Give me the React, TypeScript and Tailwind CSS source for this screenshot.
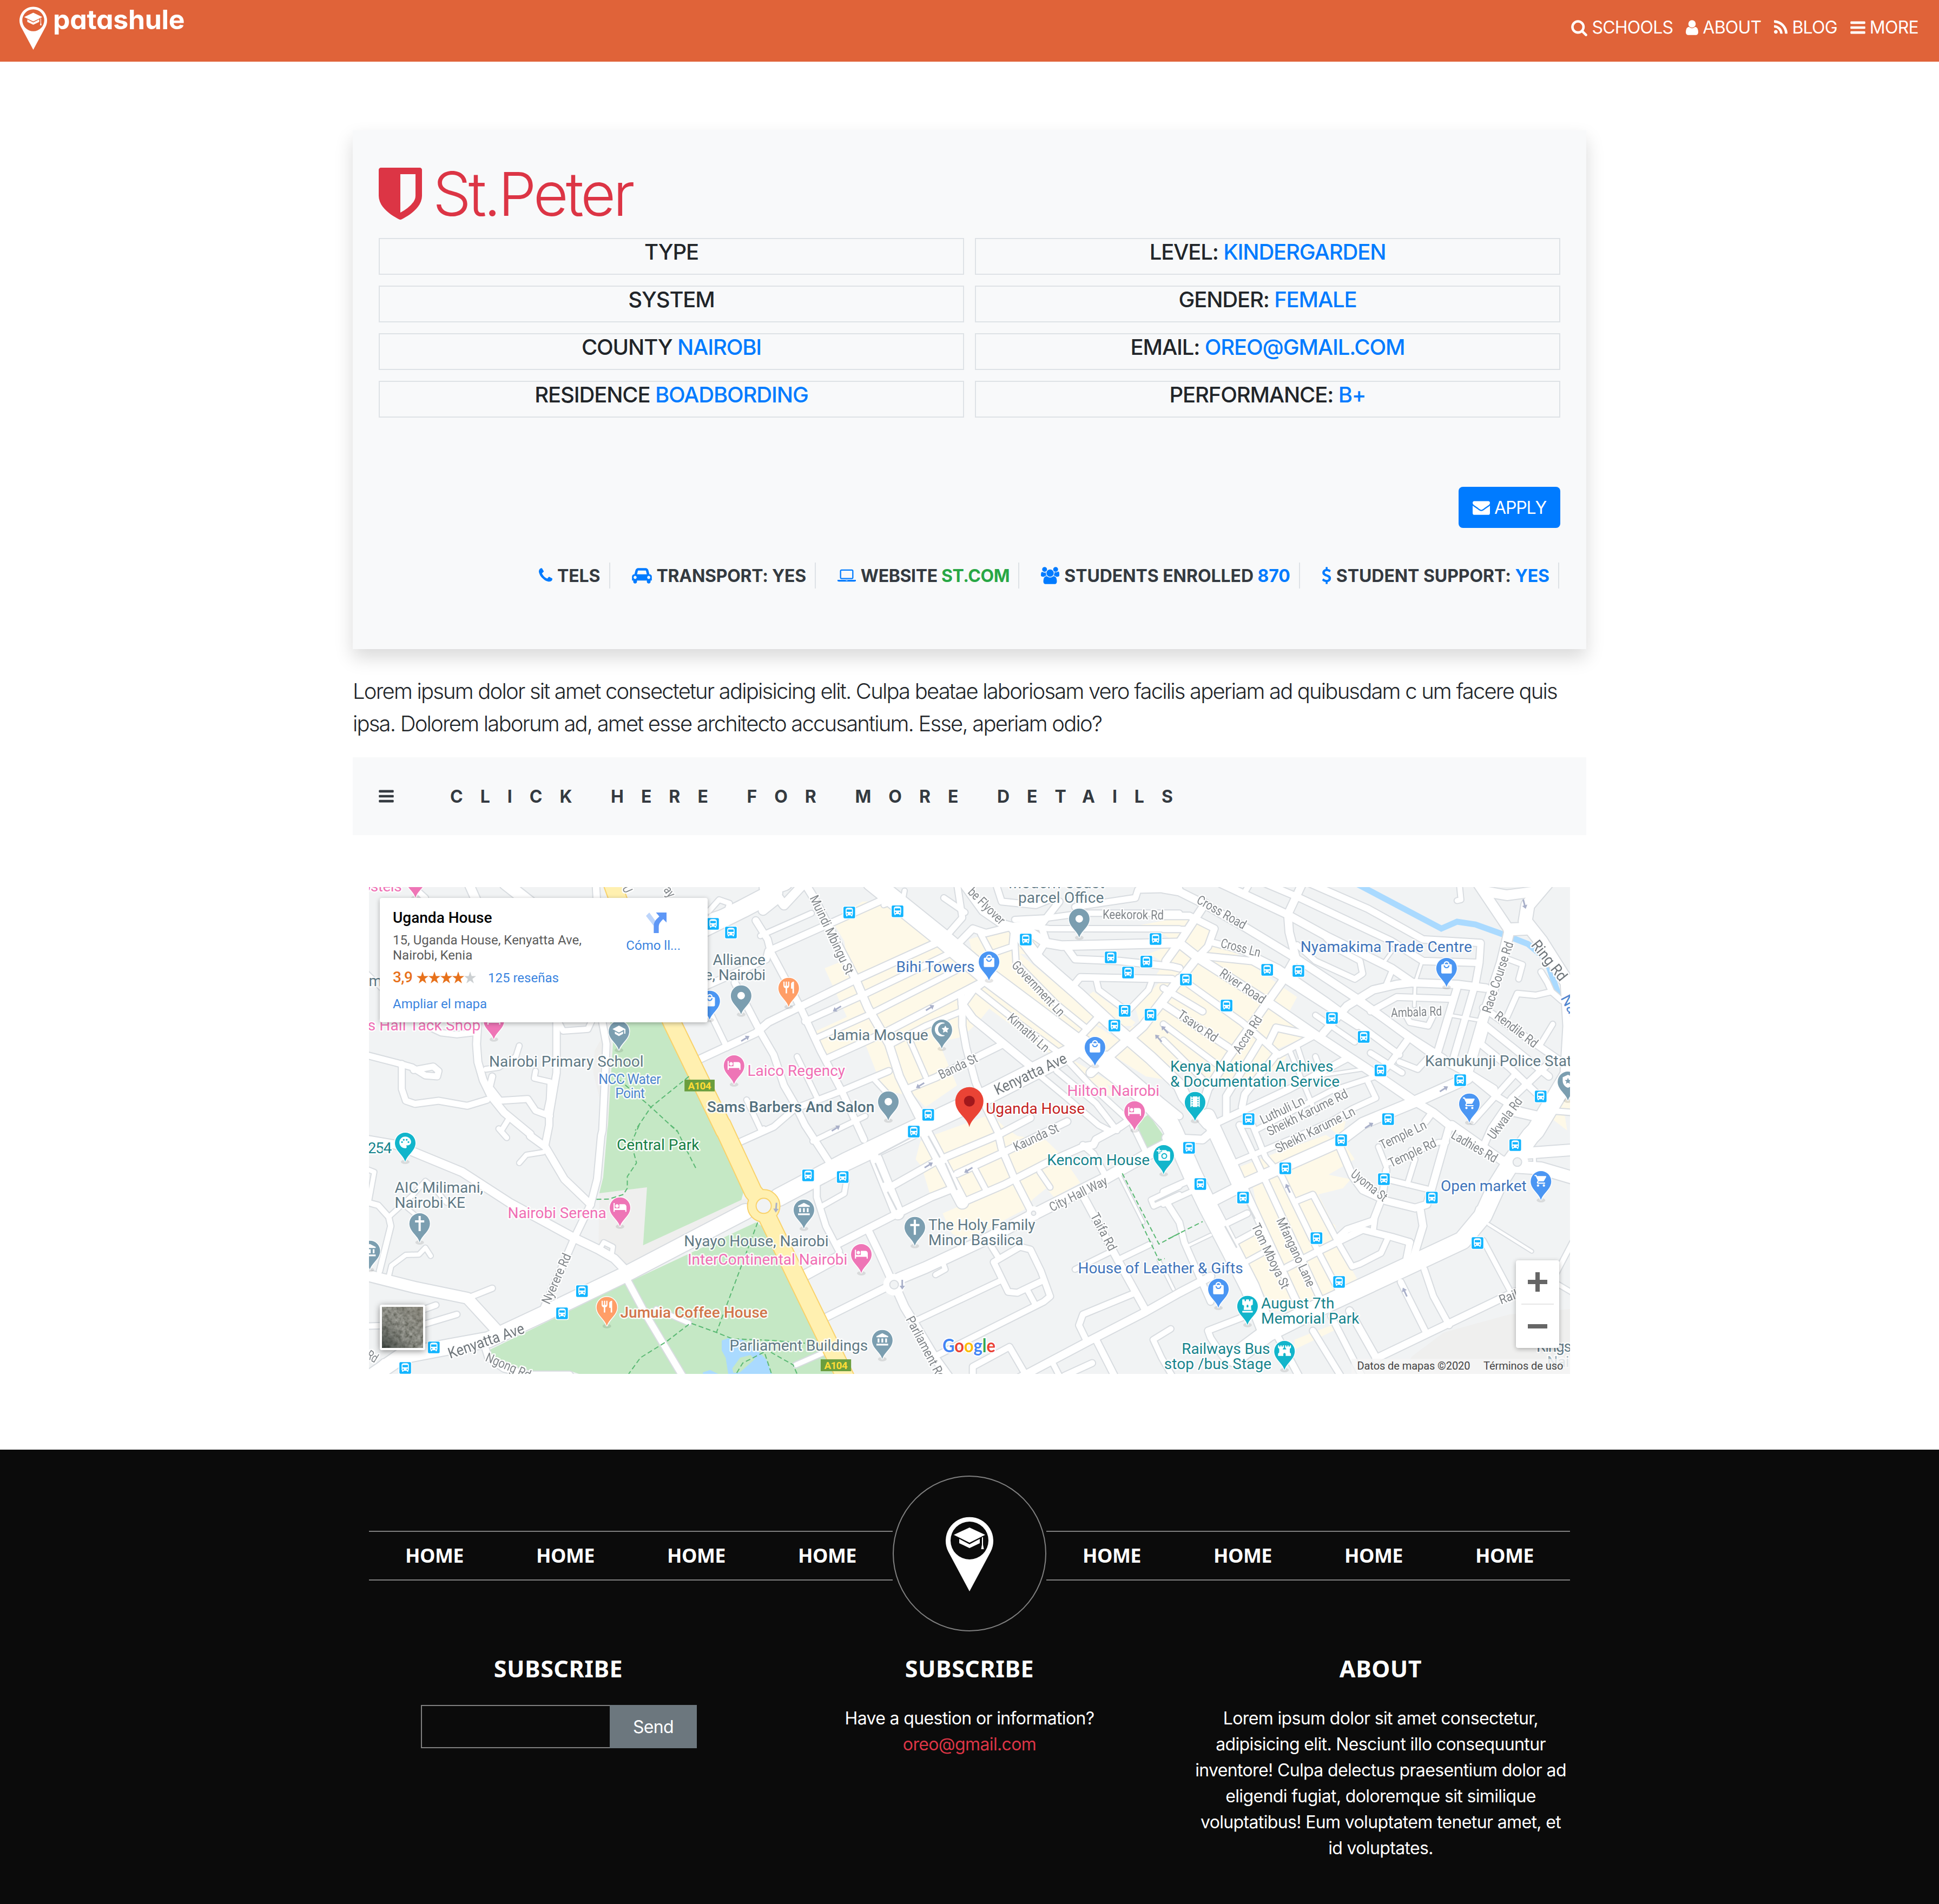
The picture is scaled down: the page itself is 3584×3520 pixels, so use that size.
import React from "react";
import {
  MdAccountBalance,
  MdAddAPhoto,
  MdDirectionsBus,
  MdFort,
  MdHotel,
  MdLocalMall,
  MdLocalPolice,
  MdPalette,
  MdRestaurant,
  MdSchool,
  MdShoppingCart,
  MdTheaters,
} from "react-icons/md";
import { FaChessRook, FaStarAndCrescent } from "react-icons/fa";

/* ------------------------------------------------------------------ */
/* Glyph icons                                                         */
/* ------------------------------------------------------------------ */

type Glyph = { box: string; d: string };

const GLYPHS: Record<string, Glyph> = {
  search: {
    box: "64 0 1664 1792",
    d: "M1216 832q0-185-131.5-316.5t-316.5-131.5-316.5 131.5-131.5 316.5 131.5 316.5 316.5 131.5 316.5-131.5 131.5-316.5zm512 832q0 52-38 90t-90 38q-54 0-90-38l-343-342q-179 124-399 124-143 0-273.5-55.5t-225-150-150-225-55.5-273.5 55.5-273.5 150-225 225-150 273.5-55.5 273.5 55.5 225 150 150 225 55.5 273.5q0 220-124 399l343 343q37 37 37 90z",
  },
  user: {
    box: "256 0 1280 1792",
    d: "M1536 1399q0 109-62.5 187t-150.5 78h-854q-88 0-150.5-78t-62.5-187q0-85 8.5-160.5t31.5-152 58.5-131 94-89 134.5-34.5q131 128 313 128t313-128q76 0 134.5 34.5t94 89 58.5 131 31.5 152 8.5 160.5zm-256-887q0 159-112.5 271.5t-271.5 112.5-271.5-112.5-112.5-271.5 112.5-271.5 271.5-112.5 271.5 112.5 112.5 271.5z",
  },
  rss: {
    box: "192 0 1408 1792",
    d: "M576 1344q0 80-56 136t-136 56-136-56-56-136 56-136 136-56 136 56 56 136zm512 123q2 28-17 48-18 21-47 21h-135q-25 0-43-16.5t-20-41.5q-22-229-184.5-391.5t-391.5-184.5q-25-2-41.5-20t-16.5-43v-135q0-29 21-47 17-17 43-17h5q160 13 306 80.5t259 181.5q114 113 181.5 259t80.5 306zm512 2q2 27-18 47-18 20-46 20h-143q-26 0-44.5-17.5t-19.5-42.5q-12-215-101-408.5t-231.5-336-336-231.5-408.5-102q-25-1-42.5-19.5t-17.5-43.5v-143q0-28 20-46 18-18 44-18h3q262 13 501.5 120t425.5 294q187 186 294 425.5t120 501.5z",
  },
  bars: {
    box: "128 0 1536 1792",
    d: "M1664 1344v128q0 26-19 45t-45 19h-1408q-26 0-45-19t-19-45v-128q0-26 19-45t45-19h1408q26 0 45 19t19 45zm0-512v128q0 26-19 45t-45 19h-1408q-26 0-45-19t-19-45v-128q0-26 19-45t45-19h1408q26 0 45 19t19 45zm0-512v128q0 26-19 45t-45 19h-1408q-26 0-45-19t-19-45v-128q0-26 19-45t45-19h1408q26 0 45 19t19 45z",
  },
  shield: {
    box: "0 0 1280 1536",
    d: "M1088 832v-640h-448v1137q119-63 213-137 235-184 235-360zM1280 64v768q0 86-33.5 170.5t-83 150-118 127.5-126.5 103-121 77.5-89.5 49.5-42.5 20q-12 6-26 6t-26-6q-16-7-42.5-20t-89.5-49.5-121-77.5-126.5-103-118-127.5-83-150-33.5-170.5v-768q0-26 19-45t45-19h1152q26 0 45 19t19 45z",
  },
  envelope: {
    box: "0 0 1792 1792",
    d: "M1792 710v794q0 66-47 113t-113 47h-1472q-66 0-113-47t-47-113v-794q44 49 101 87 362 246 497 345 57 42 92.5 65.5t94.5 48 110 24.5h2q51 0 110-24.5t94.5-48 92.5-65.5q170-123 498-345 57-39 100-87zm0-294q0 79-49 151t-122 123q-376 261-468 325-10 7-42.5 30.5t-54 38-52 32.5-57.5 27-50 9h-2q-23 0-50-9t-57.5-27-52-32.5-54-38-42.5-30.5q-91-64-262-182.5t-205-142.5q-62-42-117-115.5t-55-136.5q0-78 41.5-130t118.5-52h1472q65 0 112.5 47t47.5 113z",
  },
  phone: {
    box: "192 0 1408 1792",
    d: "M1600 1240q0 27-10 70.5t-21 68.5q-21 50-122 106-94 51-186 51-27 0-53-3.5t-57.5-12.5-47-14.5-55.5-20.5-49-18q-98-35-175-83-127-79-264-216t-216-264q-48-77-83-175-3-9-18-49t-20.5-55.5-14.5-47-12.5-57.5-3.5-53q0-92 51-186 56-101 106-122 25-11 68.5-21t70.5-10q14 0 21 3 18 6 53 76 11 19 30 54t35 63.5 31 53.5q3 4 17.5 25t21.5 35.5 7 28.5q0 20-28.5 50t-62 55-62 53-28.5 46q0 9 5 22.5t8.5 20.5 14 24 11.5 19q76 137 174 235t235 174q2 1 19 11.5t24 14 20.5 8.5 22.5 5q18 0 46-28.5t53-62 55-62 50-28.5q14 0 28.5 7t35.5 21.5 25 17.5q25 15 53.5 31t63.5 35 54 30q70 35 76 53 3 7 3 21z",
  },
  car: {
    box: "0 0 2048 1792",
    d: "M480 1088q0-66-47-113t-113-47-113 47-47 113 47 113 113 47 113-47 47-113zm36-320h1016l-89-357q-2-8-14-17.5t-21-9.5h-768q-9 0-21 9.5t-14 17.5zm1372 320q0-66-47-113t-113-47-113 47-47 113 47 113 113 47 113-47 47-113zm160-96v384q0 14-9 23t-23 9h-96v128q0 80-56 136t-136 56-136-56-56-136v-128h-1024v128q0 80-56 136t-136 56-136-56-56-136v-128h-96q-14 0-23-9t-9-23v-384q0-93 65.5-158.5t158.5-65.5h28l105-419q23-94 104-157.5t179-63.5h768q98 0 179 63.5t104 157.5l105 419h28q93 0 158.5 65.5t65.5 158.5z",
  },
  laptop: {
    box: "0 0 1920 1792",
    d: "M416 1280q-66 0-113-47t-47-113v-704q0-66 47-113t113-47h1088q66 0 113 47t47 113v704q0 66-47 113t-113 47h-1088zm-32-864v704q0 13 9.5 22.5t22.5 9.5h1088q13 0 22.5-9.5t9.5-22.5v-704q0-13-9.5-22.5t-22.5-9.5h-1088q-13 0-22.5 9.5t-9.5 22.5zm1376 928h160v96q0 40-47 68t-113 28h-1600q-66 0-113-28t-47-68v-96h1760zm-720 96q16 0 16-16t-16-16h-160q-16 0-16 16t16 16h160z",
  },
  users: {
    box: "0 0 1920 1792",
    d: "M593 896q-162 5-265 128h-134q-82 0-138-40.5t-56-118.5q0-353 124-353 6 0 43.5 21t97.5 42.5 119 21.5q67 0 133-23-5 37-5 66 0 159 93 293zm1071 637q0 120-73 189.5t-194 69.5h-874q-121 0-194-69.5t-73-189.5q0-53 3.5-103.5t14-109 26.5-108.5 43-97.5 62-81 85.5-53.5 111.5-20q10 0 43 21.5t73 48 107 48 135 21.5 135-21.5 107-48 73-48 43-21.5q61 0 111.5 20t85.5 53.5 62 81 43 97.5 26.5 108.5 14 109 3.5 103.5zm-1024-1277q0 106-75 181t-181 75-181-75-75-181 75-181 181-75 181 75 75 181zm704 384q0 159-112.5 271.5t-271.5 112.5-271.5-112.5-112.5-271.5 112.5-271.5 271.5-112.5 271.5 112.5 112.5 271.5zm576 225q0 78-56 118.5t-138 40.5h-134q-103-123-265-128 93-134 93-293 0-29-5-66 66 23 133 23 59 0 119-21.5t97.5-42.5 43.5-21q124 0 124 353zm-128-609q0 106-75 181t-181 75-181-75-75-181 75-181 181-75 181 75 75 181z",
  },
  dollar: {
    box: "384 0 1024 1792",
    d: "M1362 1185q0 153-99.5 263.5t-258.5 136.5v175q0 14-9 23t-23 9h-135q-13 0-22.5-9.5t-9.5-22.5v-175q-66-9-127.5-31t-101.5-44.5-74-48-46.5-37.5-17.5-18q-17-21-2-41l103-135q7-10 23-12 15-2 24 9l2 2q113 99 243 125 37 8 74 8 81 0 142.5-43t61.5-122q0-28-15-53t-33.5-42-58.5-37.5-66-32-80-32.5q-39-16-61.5-25t-61.5-26.5-62.5-31-56.5-35.5-53.5-42.5-43.5-49-35.5-58-21-66.5-8.5-78q0-138 98-242t255-134v-180q0-13 9.5-22.5t22.5-9.5h135q14 0 23 9t9 23v176q57 6 110.5 23t87 33.5 63.5 37.5 39 29 15 14q17 18 5 38l-81 146q-8 15-23 16-14 3-27-7-3-3-14.5-12t-39-26.5-58.5-32-74.5-26-85.5-11.5q-95 0-155 43t-60 111q0 26 8.5 48t29.5 41.5 39.5 33 56 31 60.5 27 70 27.5q53 20 81 31.5t76 35 75.5 42.5 62 50 53 63.5 31.5 76.5 13 94z",
  },
};

function Icon({ name, className }: { name: string; className?: string }) {
  const g = GLYPHS[name];
  return (
    <svg viewBox={g.box} className={className} fill="currentColor" fillRule="nonzero">
      <path d={g.d} />
    </svg>
  );
}

function PinLogo({ className }: { className?: string }) {
  return (
    <svg viewBox="0 0 88 138" className={className} fill="#fff">
      <path
        fillRule="evenodd"
        d="M44 138 L5 65 A44 44 0 1 1 83 65 Z M44 9 A35 35 0 1 0 44 79 A35 35 0 1 0 44 9 Z"
      />
      <path d="M44 20 L73 33.5 L44 48 L15 33.5 Z" />
      <path d="M25 41 L44 51 L63 41 V49 L44 58 L25 49 Z" />
      <path d="M67 38 H69 V52 L70.500 60 H65.500 L67 52 Z" />
    </svg>
  );
}

/* ------------------------------------------------------------------ */
/* Map data: six survey tiles, each with its own local grid            */
/* ------------------------------------------------------------------ */

const KX = 760 / 1568;
const ORIGIN: Record<string, [number, number]> = {
  A: [670, 1630],
  B: [1420, 1630],
  C: [2160, 1630],
  D: [670, 2080],
  E: [1420, 2080],
  F: [2160, 2080],
};

type Pt = [number, number];

function pts(src: string): Pt[] {
  let tile: Pt = ORIGIN.A;
  const out: Pt[] = [];
  for (const tok of src.split(" ")) {
    if (ORIGIN[tok]) {
      tile = ORIGIN[tok];
    } else if (tok) {
      const [x, y] = tok.split(",").map(Number);
      out.push([tile[0] + x * KX, tile[1] + y / 3]);
    }
  }
  return out;
}

const line = (src: string) =>
  "M" + pts(src).map((p) => `${p[0].toFixed(1)} ${p[1].toFixed(1)}`).join("L");

const BEIGE = [
  "B 360,110 430,110 640,325 820,540 845,700 800,780 740,860 650,890 720,1130 600,1250 560,1190 440,1160 370,900 225,965 180,830 300,750 215,480 300,430 290,330 240,210",
  "B 765,320 880,270 960,260 1020,290 1025,410 960,400 1240,740 1190,850 850,560 850,430 780,400",
  "B 800,600 830,565 1130,910 1095,975 820,680",
  "B 1190,880 1240,790 1340,880 1310,960 1440,1080 1560,1110 1568,700 1540,560 1490,560 1400,700 1420,800 1260,800 1200,650 1240,610 1400,780 1290,960",
  "B 1150,980 1340,1140 1330,1160 1290,1120 1320,1200 1260,1160",
  "B 1470,260 1420,240 1568,200 1568,520 1480,515 1510,450 1450,400 1560,340",
  "C 0,205 60,210 130,220 180,260 150,330 260,400 420,570 490,640 460,720 540,850 380,950 450,970 420,1040 250,1110 100,1080 0,1000",
  "E 640,50 850,-60 900,10 950,60 1060,85 1120,170 1190,320 1090,400 1060,350 1010,410 975,470 750,640 700,600 665,490 760,430 690,360 615,375 585,230 562,190 580,90",
  "F 265,235 400,160 600,55 680,125 710,190 610,275 695,300 665,350 570,385 615,515 600,520 635,555 650,680 730,880 660,940 540,1040 400,1030 290,750 265,650 330,600 350,560 320,330 290,320",
  "F 550,1150 640,1100 630,1140 480,1245 480,1190",
  "F 600,0 610,-30 675,-20 660,70",
  "C 1460,1260 1500,1190 1531,1210 1531,1260",
  "C 1440,1290 1510,1290 1520,1380",
];

const GREEN = [
  "A 945,780 1160,780 1360,1380 D 1372,80 1455,360 1445,415 1070,667 1085,345 903,378 918,290 935,0 A 935,1380 955,900",
  "D 1500,540 1030,860 480,1250 510,1320 560,1350 640,1365 790,1362 830,1382 E 250,1382 150,1060 20,600",
  "E 1405,-10 1450,-60 1525,95 1445,135",
];

const GREY = [
  "D 903,378 1085,345 1070,667 1445,415 1475,400 1480,470 1010,800 960,730 900,690",
  "F 1531,1020 1300,1050 1050,1150 930,1280 880,1380 1531,1380",
  "A 945,780 885,940 880,1060 935,1380 955,950",
];

const WATER = [
  "D 1370,1195 1395,1182 1450,1190 1500,1240 1540,1300 1562,1382 1395,1382 1385,1290 1370,1250",
  "D 1298,1372 1325,1358 1360,1382 1298,1382",
];

/* width | points */
const ROADS: [number, string][] = [
  [16, "A 405,10 445,140"],
  [22, "A 545,10 650,130"],
  [10, "A 180,10 240,90"],
  [12, "A 890,10 905,400 915,780 930,900 925,1080 915,1380 D 910,60 895,300 870,440 810,620 760,790 690,1020"],
  [12, "A 740,780 740,1060 712,1300 D 712,0 697,110"],
  [10, "A 745,770 765,828 860,818 875,770"],
  [10, "A 230,790 300,838 360,848 440,835"],
  [13, "A 440,770 435,900 440,1000 460,1100 490,1190 540,1280 640,1400 D 640,60 697,120 770,300 870,440"],
  [11, "A 10,960 130,1005 190,1030 240,1075 285,1080 290,1050 270,1025 195,1045"],
  [11, "A 150,1010 150,1150 165,1215 200,1232 290,1215 400,1243 475,1210"],
  [11, "A 495,1080 485,1140 525,1215 630,1205 660,1270 715,1300"],
  [9, "A 598,910 585,970 520,1030 470,1040"],
  [9, "A 660,1050 655,1090 715,1110 712,1210 700,1290"],
  [9, "A 560,1310 530,1380 D 520,20 550,70"],
  [9, "A 10,500 80,600"],
  [32, "A 1290,265 1450,150 1568,60 B 0,30 60,0"],
  [16, "B -20,160 40,90 60,130 130,20"],
  [9, "A 1320,165 1360,100 1400,120 1390,160 1330,190"],
  [12, "A 1300,585 1540,430 B 0,385 200,255 430,105"],
  [9, "B -30,300 165,175"],
  [12, "A 1500,215 1545,320 B 10,390 120,690 200,940 280,1160 E 365,80"],
  [13, "A 1285,985 1500,840 B 0,780 330,545 640,340"],
  [10, "A 1330,740 1390,920"],
  [12, "A 1420,560 1520,840 1568,960 B 60,1130 100,1230 E 140,0 230,200"],
  [9, "A 1465,1210 1520,1380 D 1530,20"],
  [11, "D 1430,100 1568,10 E 100,-90 B 280,1160 460,1050"],
  [9, "B 110,970 140,1060 190,1210"],
  [9, "B 400,1090 470,1200"],
  [11, "B 140,775 360,630 690,400"],
  [10, "B 180,870 380,740 760,460"],
  [12, "B 220,985 440,840 830,545"],
  [10, "B 470,900 600,800 735,720"],
  [9, "B 540,880 600,1080"],
  [12, "B 530,1150 640,1085 890,905"],
  [14, "B 140,10 170,80 330,530 380,700 460,900 500,1080 570,1290 E 600,20"],
  [10, "B 510,1120 600,1320"],
  [12, "B 735,620 740,720 740,800 755,920 790,1110 830,1250 875,1385 E 890,130 940,300 1000,470"],
  [14, "B 830,545 780,600 740,680 780,760 890,890 990,1010 1040,1060"],
  [10, "B 795,600 960,790 1110,950"],
  [10, "B 940,330 945,450 1100,680 1210,810"],
  [12, "B 1170,890 1260,750"],
  [22, "B 940,260 1030,430 1180,620 1300,780 1460,980 1568,1130 C 60,1190 150,1340"],
  [16, "B 1568,540 1430,800 1290,980 1230,1060"],
  [12, "B 1290,960 1500,1220 1568,1300"],
  [11, "B 720,10 740,200 680,300"],
  [10, "B 670,90 750,170"],
  [12, "B 720,350 780,260 830,285 940,245 1040,225"],
  [10, "B 810,290 850,400 930,360 935,280"],
  [8, "B 520,50 515,90 440,130"],
  [16, "B 740,0 820,160 900,240 1000,280 1060,340 1120,355 1568,340 C 40,350"],
  [11, "B 870,20 890,110 1020,130 1090,90"],
  [12, "B 1110,110 1040,240 1060,330 1020,420"],
  [10, "B 940,210 1070,200 1200,175 1568,175"],
  [10, "B 960,240 1070,260 1568,262"],
  [12, "B 1140,370 1170,430 1340,440 1540,470 1568,480"],
  [11, "B 1170,140 1400,90 1410,45 1568,40"],
  [12, "B 1150,600 1190,530 1540,540"],
  [10, "B 1250,540 1260,600 1370,720 1450,600 1460,560"],
  [10, "B 1040,1080 1140,1200 1260,1350 E 1300,30"],
  [10, "B 1120,960 1230,1130 1380,1330"],
  [10, "B 1100,1050 1250,1230 1330,1380"],
  [14, "C -20,40 40,55 130,120 300,260 470,410 720,650 1010,960 1140,1060 1240,1150"],
  [14, "C 200,10 450,180 600,300 850,480 930,560"],
  [12, "C 370,10 500,90 850,330 970,440 1180,450"],
  [14, "C 510,10 455,180 460,280 485,420 430,560 230,970 150,1150 130,1240"],
  [10, "C 310,10 290,60"],
  [12, "C 540,10 760,150 970,320 1190,340 1185,450 1170,570"],
  [11, "C 160,335 280,380 420,480 600,660 880,960"],
  [16, "C 40,340 110,420 390,680 560,850 800,1080 940,1220"],
  [14, "C 140,120 40,340 -10,440"],
  [12, "C -20,190 80,190 175,260 150,360 110,420"],
  [10, "C -20,265 70,265"],
  [12, "C 120,410 320,440 420,520 720,800"],
  [11, "C -20,590 130,720"],
  [11, "C 50,540 280,780 360,880 420,960"],
  [12, "C -20,680 230,920"],
  [10, "C -20,790 190,1020"],
  [10, "C -20,880 140,1110"],
  [14, "C 110,420 -20,660"],
  [9, "C 560,740 710,890"],
  [14, "C 590,840 680,690 780,600 870,570 930,560 1100,570 1210,590"],
  [11, "C 770,720 870,640 1080,650"],
  [12, "C 720,660 920,860 1050,980"],
  [10, "C 490,350 560,440 710,540 740,510 730,440 640,370 600,310"],
  [10, "C 905,740 920,780 990,800 1010,740"],
  [9, "C 850,500 830,570"],
  [5, "C 965,450 940,560 937,690"],
  [5, "C 850,390 820,450"],
  [13, "C 1100,590 1025,950"],
  [12, "C 1165,590 1080,1010"],
  [5, "C 1070,740 1190,770"],
  [18, "C 1180,10 1300,270 1270,450 1200,760 1150,1010 1140,1060"],
  [24, "C 1440,10 1370,130 1360,220 1420,330 1520,560 1530,800 1520,1050"],
  [18, "C 1210,55 1290,75 1420,50"],
  [22, "C 1300,265 1370,260"],
  [9, "C 1110,30 1115,100 1100,105"],
  [9, "C 1295,430 1350,460 1335,540"],
  [10, "C 1290,750 1330,620 1400,630 1460,610 1500,660"],
  [10, "C 1420,500 1445,560 1460,610"],
  [12, "C 1200,700 1320,820 1400,900 1500,1000"],
  [9, "C 1415,910 1465,790"],
  [12, "C 1210,800 1450,1080"],
  [12, "C 1210,800 1190,900 1300,1030 1400,1170"],
  [12, "C 1440,1020 1310,1200 1230,1370 F 1200,120"],
  [12, "C 1140,1060 1250,1190 1340,1270"],
  [10, "C 1320,1070 1160,1330"],
  [12, "C 180,1340 460,1150 680,980"],
  [9, "C 330,1380 620,1160 810,1070"],
  [10, "F 250,210 480,70 C 620,1330 700,1260 790,1200 760,1110"],
  [10, "C 770,950 890,1060"],
  [12, "C 920,860 850,1000 800,1080"],
  [10, "C 880,1000 950,1040 1000,960"],
  [12, "C 380,900 410,810 540,850"],
  [11, "C 420,960 560,850"],
  [12, "C 350,880 220,1190 220,1300"],
  [12, "C 410,960 290,1180 280,1250"],
  [8, "C 460,930 560,1280"],
  [8, "C 490,910 520,1040"],
  [9, "C 560,970 575,1030"],
  [5, "C 560,1080 740,1040"],
  [20, "F 140,440 300,320 640,100 C 740,1340 940,1220 1140,1090"],
  [14, "C 940,1220 1010,1280 1070,1350 F 1080,10"],
  [12, "C 980,1330 1000,1290"],
  [32, "C 1540,1040 1400,1380 F 1380,60 1310,200 1250,340 1200,500 1120,640 900,790 560,1020 380,1150 250,1290"],
  [18, "C 1310,1270 1400,1300"],
  [10, "C 1450,1270 1540,1280"],
  [34, "B 395,0 660,310 840,530 1180,900 1420,1170 1530,1340 F 20,40 90,270 150,450 240,700 310,900 370,1120"],
  [28, "D 40,1390 150,1280 330,1230 480,1190 700,1040 1000,830 1460,480"],
  [32, "E 40,400 300,200 560,20 B 840,1180 1150,950 1200,900"],
  [15, "D 10,80 130,110 230,170 380,260 560,430 800,620 900,690 960,740 1000,800"],
  [20, "D 10,830 200,900 400,960 520,1150"],
  [10, "D 400,960 495,905"],
  [8, "D 10,240 45,260 25,420"],
  [10, "D 10,425 60,445 100,510 108,560 65,810"],
  [8, "D 100,510 190,390 240,310 275,350 320,430"],
  [6, "D 170,460 220,520"],
  [8, "D 100,840 110,780 165,720 215,718 240,680 260,725"],
  [10, "D 10,1115 235,1105 360,1050"],
  [10, "D 200,1040 280,998"],
  [8, "D 598,210 625,165 690,150"],
  [8, "D 900,700 920,650 955,675 950,720"],
  [12, "D 1010,860 1080,1050 1220,1390"],
  [8, "D 1120,1020 1245,1098"],
  [12, "D 465,1220 480,1290 540,1350 640,1385 790,1385"],
  [8, "D 20,1390 80,1310"],
  [9, "E 170,90 370,-50"],
  [22, "E 412,190 495,490"],
  [22, "E 600,40 740,430"],
  [13, "E 265,660 480,500 620,400 690,360"],
  [12, "E 470,340 640,200 870,60 1000,-40"],
  [12, "E 720,270 900,150 1140,-20"],
  [12, "E 740,430 900,330 1060,210 1200,120"],
  [10, "E 790,250 830,360"],
  [9, "E 1035,260 1075,345"],
  [20, "E 500,850 600,790 850,620 1020,490 1280,300 1450,160 1568,70"],
  [13, "E 380,580 420,700 470,860"],
  [15, "E 480,880 520,1010 640,1300 690,1400"],
  [11, "E 185,330 185,400 220,560 270,700"],
  [9, "E 205,450 290,380 298,310"],
  [18, "E 130,840 270,730"],
  [13, "E 215,1070 450,900"],
  [9, "E 105,1330 215,1260"],
  [10, "E 570,1080 890,860"],
  [11, "E 640,1280 1050,980 1075,950 1040,810 1000,690 960,675 860,760 915,925 950,930 1050,860"],
  [10, "E 850,670 880,740"],
  [10, "E 990,920 1020,1000"],
  [9, "E 665,760 675,800 638,830"],
  [13, "E 1200,390 1330,740 1440,1030"],
  [9, "E 1170,800 1310,700"],
  [10, "E 1330,750 1455,662"],
  [14, "E 960,1400 1220,1200 1440,1035 1568,930 F 160,840"],
  [11, "E 1400,930 1200,1050 1185,1110 1215,1200"],
  [12, "E 1250,1190 1320,1390"],
  [10, "E 1085,1320 1110,1390"],
  [11, "E 1130,1390 1235,1320"],
  [11, "E 780,1390 780,1340 920,1230 980,1380"],
  [10, "E 1535,1130 1468,1190 1500,1290 1540,1390"],
  [11, "E 1200,110 1240,160 1290,290"],
  [13, "E 1200,120 1240,110 1250,80 1340,10 1400,-50"],
  [10, "E 1390,0 1440,150"],
  [5, "E 1340,280 1430,540"],
  [5, "E 1490,750 1545,910"],
  [9, "E 1568,340 1460,415 1470,450 1568,385"],
  [11, "E 1520,430 1568,540 F 60,650 160,980"],
  [26, "F 150,-50 270,330"],
  [13, "F 285,340 380,640 520,1080"],
  [11, "F 270,0 370,310 580,970"],
  [10, "F 280,0 320,0"],
  [10, "F 320,0 370,180 430,280 570,700 660,950"],
  [10, "F 490,420 550,385 650,660 700,785 730,770 810,710 835,630"],
  [12, "F 450,790 570,700 740,580 850,620 920,650"],
  [12, "F 650,620 680,580 780,530 815,400 830,250"],
  [13, "F 650,110 700,280 740,360 830,420 940,460 985,440 1000,370 1070,10"],
  [13, "F 960,470 970,560 930,750"],
  [12, "F 905,760 920,650"],
  [10, "F 780,590 788,500"],
  [9, "F 800,120 830,230"],
  [10, "F 830,300 1000,360"],
  [9, "F 840,210 1030,95 1060,95"],
  [9, "F 910,330 940,190 925,140"],
  [15, "F 1080,0 1270,195 1330,210"],
  [20, "F 1330,160 1560,135"],
  [22, "F 1310,230 1420,240 1560,300"],
  [5, "F 1395,170 1397,230"],
  [6, "F 1180,460 1165,520 1190,545 1215,505"],
  [5, "F 1220,550 1385,700"],
  [11, "F 885,870 985,1160"],
  [11, "F 975,800 1010,950 1070,1110"],
  [13, "F 790,1295 1320,925"],
  [13, "F 690,1030 795,1300"],
  [9, "F 1200,640 1310,940"],
  [9, "F 1540,650 1450,900"],
  [8, "F 1470,870 1540,930"],
  [11, "F 550,1140 660,1400"],
  [11, "F 620,1060 740,1400"],
  [11, "F 310,1050 150,1140 160,1180 210,1290 410,1160"],
  [12, "F 400,1130 500,1400"],
  [5, "F 80,665 160,610"],
  [11, "F 215,550 300,490"],
  [10, "F 260,645 330,590"],
  [9, "F 300,755 370,700"],
  [11, "F -20,370 80,305"],
  [9, "F -20,440 100,360"],
  [14, "F -10,70 130,80 170,30"],
];

const HIGHWAY = [
  "A 950,0 1000,200 1180,780 1380,1380 D 1372,0 1490,370 1530,440",
  "E -30,430 0,520 110,850 298,1410",
];

const DASHES = [
  "A 980,1100 1100,1250 1200,1385",
  "A 1245,1080 1100,1250 1040,1380",
  "D 1055,0 1025,100 1045,210 1010,285 1010,350 995,385 940,410 890,412",
  "D 1175,0 1200,30 1240,150 1275,250",
  "D 1507,540 1350,1150",
  "D 1255,1100 1350,1150 1410,1185 1568,1195 E 140,1210",
  "D 1245,1105 1160,1200 1060,1290 1015,1380",
  "D 1530,1260 1450,1320 1425,1380",
  "D 1535,1270 1560,1380",
  "E 10,1260 95,1330 110,1380",
  "E 1350,268 1490,660 1568,600 F 0,630 130,535",
  "E 1425,550 1490,750 1512,740",
];

const MEDIANS = [
  "E 408,210 440,320",
  "E 455,370 490,470",
  "E 610,60 655,180",
  "E 675,210 720,360",
  "E 420,165 550,65",
  "F 215,560 260,680",
  "F 300,440 330,520",
];

const SLATE = "#607985";
const PINK = "#f06eb4";
const BLUE = "#3f74bb";
const TEAL = "#17848d";
const STREET = "#7f8488";

type Lab = [string, string, string, number?, number?];

const LABELS: Lab[] = [
  ["Hostels", "A -40,53 150,53", PINK],
  ["m", "A 26,580 66,580", SLATE],
  ["s Hall Tack Shop", "A 22,826 450,826", PINK],
  ["Nairobi Primary School", "A 485,1025 1072,1025", SLATE],
  ["NCC Water", "A 902,1122 1138,1122", "#4f86cf", 25],
  ["Point", "A 966,1200 1077,1200", "#4f86cf", 25],
  ["Alliance", "A 1338,462 1537,462", SLATE],
  ["e, Nairobi", "A 1306,545 1537,545", SLATE],
  ["Laico Regency", "A 1470,1076 B 293,1076", PINK],
  ["Sams Barbers And Salon", "A 1316,1277 B 405,1277", "#53707e", 28, 500],
  ["Modern Coast", "B 918,36 1282,36", SLATE],
  ["parcel Office", "B 955,118 1280,118", SLATE],
  ["Bihi Towers", "B 490,500 787,500", BLUE],
  ["Jamia Mosque", "B 232,878 610,878", SLATE],
  ["Hilton Nairobi", "B 1142,1187 1492,1187", PINK],
  ["Uganda House", "B 832,1286 1207,1286", "#c5221f", 28],
  ["Kenya National Archives", "C 8,1052 628,1052", TEAL],
  ["& Documentation Service", "C 8,1136 652,1136", TEAL],
  ["Nyamakima Trade Centre", "C 505,391 1157,391", BLUE],
  ["Kamukunji Police Stat", "C 980,1022 1537,1022", SLATE],
  ["Open market", "F 1040,367 1365,367", BLUE],
  ["House of Leather & Gifts", "E 1183,822 F 284,822", BLUE],
  ["August 7th", "F 355,1018 632,1018", TEAL],
  ["Memorial Park", "F 355,1102 727,1102", TEAL],
  ["Railways Bus", "F 52,1268 387,1268", TEAL],
  ["stop /bus Stage", "E 1512,1352 F 392,1352", TEAL],
  ["Kings", "F 1405,1258 1537,1258", SLATE],
  ["Nai", "F 1445,1340 1528,1340", "#9db0ba"],
  ["Kencom House", "E 1065,223 1455,223", TEAL],
  ["The Holy Family", "E 613,581 1018,581", SLATE],
  ["Minor Basilica", "E 613,665 973,665", SLATE],
  ["Parliament Buildings", "D 1402,1250 E 380,1250", SLATE],
  ["InterContinental Nairobi", "D 1242,773 E 302,773", PINK],
  ["Nyayo House, Nairobi", "D 1228,671 E 230,671", SLATE],
  ["Central Park", "D 972,137 1284,137", "#188046"],
  ["Nairobi Serena", "D 556,515 930,515", PINK],
  ["AIC Milimani,", "D 125,375 460,375", SLATE],
  ["Nairobi KE", "D 125,458 392,458", SLATE],
  ["254", "D 22,155 112,155", TEAL],
  ["Jumuia Coffee House", "D 985,1067 1545,1067", "#d2754a", 28, 500],
];

const STREETS: [string, string, number?][] = [
  ["Muindi Mbingu St", "B 172,80 312,508"],
  ["be Flyover", "B 770,45 895,225"],
  ["Keekorok Rd", "B 1275,182 1508,186"],
  ["Government Ln", "B 938,450 1122,735"],
  ["Kimathi Ln", "B 920,745 1065,932"],
  ["Banda St", "B 652,1075 795,975"],
  ["Kenyatta Ave", "B 865,1160 1135,975", 28],
  ["Cross Road", "C 112,95 292,245"],
  ["Cross Ln", "C 200,340 350,395"],
  ["River Road", "C 200,500 365,660"],
  ["Tsavo Rd", "C 40,730 182,872"],
  ["Accra Rd", "C 258,945 345,750"],
  ["Ambala Rd", "C 848,728 1042,718"],
  ["Race Course Rd", "C 1212,725 1300,335"],
  ["Rendile Rd", "C 1250,735 1402,905"],
  ["Ring Rd", "C 1395,335 1508,540", 28],
  ["Luthuli Ln", "C 352,1325 515,1210"],
  ["Sheikh Karume Rd", "F 378,40 C 680,1172"],
  ["Sheikh Karume Ln", "F 410,135 C 708,1270"],
  ["Temple Ln", "F 808,115 C 980,1345"],
  ["Temple Rd", "F 842,215 1018,95"],
  ["Ukwala Rd", "F 1228,70 C 1338,1205"],
  ["Uyoma St", "F 702,262 828,408"],
  ["Ladhies Rd", "F 1082,48 1250,190"],
  ["Mfangano Lane", "F 425,518 545,892"],
  ["Tom Mboya St", "F 330,550 447,902"],
  ["Rail", "F 1262,972 1330,935"],
  ["Kaunda St", "E 938,125 1105,12"],
  ["City Hall Way", "E 1075,460 1290,305"],
  ["Taifa Rd", "E 1242,492 1315,692"],
  ["Parliament Rd", "E 538,1065 662,1405"],
  ["Nyerere Rd", "D 698,988 782,715"],
  ["Kenyatta Ave", "D 328,1270 615,1125", 28],
  ["Ngong Rd", "D 472,1285 640,1390"],
  ["Rd", "D 20,1268 55,1300"],
  ["ay", "A 1160,32 1182,80"],
  ["U", "A 1005,25 1015,58"],
];

const BUSES =
  "A 1337,234 1405,282 B 309,171 493,164 982,321 1477,318 1306,420 1442,443 1372,504 1359,716 1320,798 1458,738 610,1293 E 555,36 152,279 284,288 C 376,489 495,495 66,543 221,687 623,756 744,861 808,1047 1112,1101 305,1317 837,1317 1419,1191 F 78,126 121,327 658,84 445,240 284,402 564,627 650,870 821,300 1004,402 1322,111 1178,654 D 837,921 761,1044 272,1233 163,1347";

type PinKind =
  | "hotel" | "school" | "dot" | "moon" | "gov" | "cross" | "police"
  | "bag" | "cart" | "food" | "film" | "palette" | "camera" | "rook" | "fort";

const PIN_COLOR: Record<PinKind, string> = {
  hotel: "#ee75b6", school: "#7b9eb0", dot: "#7b9eb0", moon: "#7b9eb0", gov: "#7b9eb0",
  cross: "#7b9eb0", police: "#7b9eb0", bag: "#4b96f3", cart: "#4b96f3", food: "#ff9e67",
  film: "#12b5cb", palette: "#12b5cb", camera: "#12b5cb", rook: "#12b5cb", fort: "#12b5cb",
};

const PIN_ICON: Partial<Record<PinKind, React.ComponentType<any>>> = {
  hotel: MdHotel, school: MdSchool, moon: FaStarAndCrescent, gov: MdAccountBalance,
  police: MdLocalPolice, bag: MdLocalMall, cart: MdShoppingCart, food: MdRestaurant,
  film: MdTheaters, palette: MdPalette, camera: MdAddAPhoto, rook: FaChessRook, fort: MdFort,
};

const PINS: [PinKind, string][] = [
  ["hotel", "A 202,-15"],
  ["hotel", "A 501,770"],
  ["hotel", "A 1417,1020"],
  ["hotel", "D 982,458"],
  ["hotel", "E 355,717"],
  ["hotel", "B 1397,1275"],
  ["school", "A 978,830"],
  ["dot", "A 1444,632"],
  ["dot", "B 1186,206"],
  ["moon", "B 662,822"],
  ["dot", "B 458,1220"],
  ["gov", "E 136,470"],
  ["gov", "E 435,1193"],
  ["cross", "E 559,566"],
  ["cross", "D 218,546"],
  ["gov", "D 28,698"],
  ["police", "C 1523,1110"],
  ["bag", "A 1324,662"],
  ["bag", "B 842,444"],
  ["bag", "B 1246,918"],
  ["bag", "C 1060,480"],
  ["cart", "C 1147,1232"],
  ["cart", "F 1420,312"],
  ["bag", "F 190,909"],
  ["food", "B 78,590"],
  ["food", "D 932,1010"],
  ["film", "C 101,1223"],
  ["palette", "D 163,99"],
  ["camera", "E 1508,168"],
  ["rook", "F 301,1004"],
  ["fort", "F 442,1254"],
];

/* position | heading in degrees, 0 points up */
const ARROWS: [string, number][] = [
  ["A 1460,870", 58], ["B 262,705", 238], ["B 617,700", 58], ["B 579,1130", 238],
  ["B 1512,820", -42], ["B 1488,868", -42], ["C 1357,125", 165], ["C 1050,1150", 58],
  ["C 765,1352", 58], ["E 258,18", 58], ["E 612,222", 58], ["E 763,250", 238],
  ["E 30,458", 185], ["E 511,885", 180], ["F 455,350", -25], ["F 901,926", -25],
];

function StreetLabel({ text, at, size = 24 }: { text: string; at: string; size?: number }) {
  const [a, b] = pts(at);
  const len = Math.hypot(b[0] - a[0], b[1] - a[1]);
  const deg = (Math.atan2(b[1] - a[1], b[0] - a[0]) * 180) / Math.PI;
  return (
    <g className="[filter:drop-shadow(2px_0_0_#fff)_drop-shadow(-2px_0_0_#fff)_drop-shadow(0_2px_0_#fff)_drop-shadow(0_-2px_0_#fff)]">
      <text
        transform={`translate(${a[0]} ${a[1]}) rotate(${deg})`}
        y={size * 0.33}
        textLength={len}
        lengthAdjust="spacingAndGlyphs"
        fontSize={size}
        fill={size > 25 ? "#6f767b" : STREET}
      >
        {text}
      </text>
    </g>
  );
}

function MapPin({ kind, at }: { kind: PinKind; at: string }) {
  const [[x, y]] = pts(at);
  const Ico = PIN_ICON[kind];
  return (
    <g transform={`translate(${x} ${y})`}>
      <ellipse cx={0} cy={35} rx={8} ry={4} fill="#000" opacity={0.1} />
      <path
        d="M0 35 C-3 22 -19 15 -19 0 A19 19 0 1 1 19 0 C19 15 3 22 0 35 Z"
        fill={PIN_COLOR[kind]}
        stroke="#fff"
        strokeWidth={3}
        paintOrder="stroke"
      />
      {kind === "dot" && <circle r={7} fill="#fff" />}
      {kind === "cross" && <path d="M-2 -14 h4 v8 h6.500 v4 h-6.500 v16 h-4 v-16 h-6.500 v-4 h6.500 Z" fill="#fff" />}
      {Ico && <Ico x={-13} y={-14} size={26} color="#fff" />}
    </g>
  );
}

function CityMap() {
  const red = pts("B 767,1217")[0];
  const rb = pts("D 1530,448")[0];
  return (
    <svg
      viewBox="682 1640 2220 900"
      className="block h-[900px] w-[2220px] [font-family:Roboto,sans-serif]"
    >
      <rect x="682" y="1640" width="2220" height="900" fill="#f1f3f4" />
      {GREY.map((p) => <path key={p} d={line(p) + "Z"} fill="#efefee" />)}
      {BEIGE.map((p) => <path key={p} d={line(p) + "Z"} fill="#fef9e8" />)}
      {GREEN.map((p) => <path key={p} d={line(p) + "Z"} fill="#c5e8c5" />)}
      {WATER.map((p) => <path key={p} d={line(p) + "Z"} fill="#aadaff" />)}
      <path d={line("D 1410,1350 1440,1290 1480,1275 1495,1300 1440,1370 1415,1375") + "Z"} fill="#c5e8c5" />
      <path
        d={line("C 715,10 1040,260 1100,222 1170,237 1290,300 1370,345 1440,430 1490,640")}
        fill="none"
        stroke="#aadaff"
        strokeWidth={11}
      />
      <g fill="none" strokeLinejoin="round" strokeLinecap="round">
        {ROADS.map(([w, p]) => (
          <path key={p} d={line(p)} stroke="#d8dce0" strokeWidth={w + 4} />
        ))}
        {ROADS.map(([w, p]) => (
          <path key={p} d={line(p)} stroke="#fff" strokeWidth={w} />
        ))}
        {MEDIANS.map((p) => (
          <path key={p} d={line(p)} stroke="#d8dce0" strokeWidth={3} strokeLinecap="butt" />
        ))}
      </g>
      <g>
        {["E 480,885", "F 1330,205", "E 1012,489"].map((p, i) => {
          const [[x, y]] = pts(p);
          return (
            <g key={p}>
              <circle cx={x} cy={y} r={i === 2 ? 13 : 20} fill="#fff" />
              <circle cx={x} cy={y} r={i === 2 ? 4 : 8} fill="#f1f3f4" stroke="#d8dce0" strokeWidth={2} />
            </g>
          );
        })}
      </g>
      <g fill="none" strokeLinejoin="round">
        {HIGHWAY.map((p) => <path key={p} d={line(p)} stroke="#f9d26b" strokeWidth={35} />)}
        <circle cx={rb[0]} cy={rb[1]} r={30} fill="#fff0b0" stroke="#f9d26b" strokeWidth={2} />
        {HIGHWAY.map((p) => <path key={p} d={line(p)} stroke="#fff0b0" strokeWidth={31} />)}
        <circle cx={rb[0]} cy={rb[1]} r={14} fill="#f1f3f4" stroke="#f9d26b" strokeWidth={2} />
        {DASHES.map((p) => (
          <path key={p} d={line(p)} stroke="#5bb974" strokeWidth={2} strokeDasharray="9 5" />
        ))}
      </g>
      {ARROWS.map(([p, deg]) => {
        const [[x, y]] = pts(p);
        return (
          <path
            key={p}
            transform={`translate(${x} ${y}) rotate(${deg})`}
            d="M0 -9 L5 -2 H1.500 V9 H-1.500 V-2 H-5 Z"
            fill="#a9b0c9"
          />
        );
      })}
      {STREETS.map(([t, p, s]) => <StreetLabel key={t + p} text={t} at={p} size={s} />)}
      <text transform="translate(2884 1845) rotate(62)" fontSize={28} fill="#4f86cf">Nairobi</text>

      {pts(BUSES).map(([x, y]) => (
        <g key={`${x}-${y}`}>
          <rect x={x - 11.500} y={y - 11.500} width={23} height={23} rx={3} fill="#12b5ff" stroke="#fff" strokeWidth={1.500} />
          <MdDirectionsBus x={x - 10} y={y - 10.500} size={20} color="#fff" />
        </g>
      ))}

      {["A 1228,1098 1343,1163", "E 200,1299 316,1365"].map((p) => {
        const [a, b] = pts(p);
        return (
          <g key={p}>
            <rect x={a[0]} y={a[1]} width={b[0] - a[0]} height={b[1] - a[1]} fill="#6b9e3e" />
            <text x={(a[0] + b[0]) / 2} y={a[1] + 18} fontSize={19} fontWeight={700} fill="#ffdc36" textAnchor="middle" textLength={43}>
              A104
            </text>
          </g>
        );
      })}

      {PINS.map(([k, p]) => <MapPin key={p} kind={k} at={p} />)}
      {LABELS.map(([t, p, c, s = 28, w = 400]) => {
        const [a, b] = pts(p);
        return (
          <text
            key={t + p}
            x={a[0] - 1}
            y={a[1]}
            textLength={b[0] - a[0] + 1}
            fontSize={s}
            fontWeight={w}
            fill={c}
            stroke="#fff"
            strokeOpacity={0.85}
            strokeWidth={5}
            strokeLinejoin="round"
            paintOrder="stroke"
          >
            {t}
          </text>
        );
      })}

      <g transform={`translate(${red[0]} ${red[1]})`}>
        <path d="M0 48 C-4 30 -26 22 -26 0 A26 26 0 1 1 26 0 C26 22 4 30 0 48 Z" fill="#ea4335" />
        <circle r={10} fill="#a1181c" />
      </g>

      <text
        x={1742}
        y={2500}
        fontSize={34}
        textLength={98}
        lengthAdjust="spacingAndGlyphs"
        fontWeight={700}
        stroke="#fff"
        strokeWidth={4}
        paintOrder="stroke"
        className="[font-family:Lato,sans-serif]"
      >
        <tspan fill="#4285f4">G</tspan>
        <tspan fill="#ea4335">o</tspan>
        <tspan fill="#fbbc05">o</tspan>
        <tspan fill="#4285f4">g</tspan>
        <tspan fill="#34a853">l</tspan>
        <tspan fill="#ea4335">e</tspan>
      </text>

      <rect x={2498} y={2512} width={404} height={28} fill="#f5f5f5" opacity={0.75} />
      <text x={2508.500} y={2531.500} fontSize={20} fill="#444" textLength={209}>Datos de mapas ©2020</text>
      <text x={2742} y={2531.500} fontSize={20} fill="#444" textLength={147.500}>Términos de uso</text>
    </svg>
  );
}

function Star({ on }: { on: boolean }) {
  return (
    <svg viewBox="1 0.500 22 22" className="h-[22px] w-[22px]" fill={on ? "#e7711b" : "#ccd0d2"}>
      <path d="M12 0.500l2.800 8.500H23l-6.800 5.200 2.700 8.300L12 17.400l-6.900 5.100 2.700-8.300L1 9h8.200z" />
    </svg>
  );
}

function PlaceCard() {
  return (
    <div className="absolute top-[20px] left-[20px] flex h-[230px] w-[606px] justify-between rounded-[4px] bg-white pl-[24px] shadow-[0_2px_8px_rgba(0,0,0,0.3)] [font-family:Roboto,sans-serif]">
      <div className="pt-[20px] text-[24px] leading-[28px] text-[#5b5b5b]">
        <div className="text-[28px] leading-[34px] font-medium text-black">Uganda House</div>
        <div className="mt-[10px]">
          15, Uganda House, Kenyatta Ave,
          <br />
          Nairobi, Kenia
        </div>
        <div className="mt-[12px] flex items-center">
          <span className="w-[44px] text-[28px] font-medium tracking-[-0.02em] text-[#e7711b]">3,9</span>
          <Star on />
          <Star on />
          <Star on />
          <Star on />
          <Star on={false} />
          <span className="mt-[2px] ml-[22px] text-[#3a84df]">125 reseñas</span>
        </div>
        <div className="mt-[20px] text-[#3a84df]">Ampliar el mapa</div>
      </div>
      <div className="mr-[40px] flex flex-col items-center pt-[27px]">
        <svg viewBox="0 0 37 37" className="h-[38px] w-[38px]">
          <path d="M0 6 L6 0 L17 15 L14 24 Z" fill="#bdd5fb" />
          <path d="M14 37 V24 C14 16 19 12 24 7 L18 0 H37 V18 L31 12 C26 17 23 20 23 26 V37 Z" fill="#5e97f6" />
        </svg>
        <div className="mt-[7px] mr-[10px] text-[24px] leading-[32px] text-[#3a84df]">Cómo ll...</div>
      </div>
    </div>
  );
}

function SatelliteThumb() {
  return (
    <div className="absolute bottom-[44px] left-[20px] h-[84px] w-[84px] rounded-[4px] border-4 border-white shadow-[0_2px_12px_rgba(0,0,0,0.45)]">
      <svg viewBox="0 0 76 76" className="block h-[76px] w-[76px]">
        <defs>
          <filter id="grain" x="0" y="0" width="100%" height="100%">
            <feTurbulence type="fractalNoise" baseFrequency="0.14" numOctaves="4" seed="7" />
            <feColorMatrix values="0.900 0 0 0 -0.08  0.900 0 0 0 -0.07  0.850 0 0 0 -0.09  0 0 0 0 1" />
          </filter>
          <linearGradient id="shade" x1="0" y1="1" x2="1" y2="0">
            <stop offset="0" stopColor="#232b28" stopOpacity="0.8" />
            <stop offset="0.5" stopColor="#5b5a54" stopOpacity="0.35" />
            <stop offset="1" stopColor="#7f7b6f" stopOpacity="0.75" />
          </linearGradient>
        </defs>
        <rect width="76" height="76" filter="url(#grain)" />
        <rect width="76" height="76" fill="url(#shade)" />
      </svg>
    </div>
  );
}

function ZoomControl() {
  return (
    <div className="absolute right-[20px] bottom-[48px] flex h-[162px] w-[80px] flex-col items-center rounded-[4px] bg-white shadow-[0_2px_8px_rgba(0,0,0,0.3)]">
      <div className="flex h-[80px] items-center">
        <svg viewBox="0 0 36 36" className="h-[36px] w-[36px]" fill="#666">
          <path d="M14 0h8v14h14v8H22v14h-8V22H0v-8h14z" />
        </svg>
      </div>
      <div className="h-[2px] w-[60px] bg-[#e6e6e6]" />
      <div className="flex h-[80px] items-center">
        <div className="h-[8px] w-[36px] bg-[#666]" />
      </div>
    </div>
  );
}

/* ------------------------------------------------------------------ */
/* Page                                                                */
/* ------------------------------------------------------------------ */

const FACTS: [string, string][] = [
  ["TYPE", ""],
  ["LEVEL:", "KINDERGARDEN"],
  ["SYSTEM", ""],
  ["GENDER:", "FEMALE"],
  ["COUNTY", "NAIROBI"],
  ["EMAIL:", "OREO@GMAIL.COM"],
  ["RESIDENCE", "BOADBORDING"],
  ["PERFORMANCE:", "B+"],
];

function NavItem({ icon, w, label }: { icon: string; w: string; label: string }) {
  return (
    <a className="flex items-center gap-[8px]">
      <Icon name={icon} className={`h-[32px] ${w}`} />
      <span>{label}</span>
    </a>
  );
}

function Stat({ icon, w, children }: { icon: string; w: string; children: React.ReactNode }) {
  return (
    <div className="flex h-[48px] items-center gap-[9px] border-r-2 border-[#dee2e6] pr-[16px]">
      <Icon name={icon} className={`h-[32px] text-[#007bff] ${w}`} />
      <span className="mt-[2px]">{children}</span>
    </div>
  );
}

function FooterLinks() {
  return (
    <nav className="mt-[102px] flex h-[92px] w-[968px] items-center border-y-2 border-[#808080]">
      {[0, 1, 2, 3].map((i) => (
        <a key={i} className="flex-1 text-center text-[36px] leading-[48px] font-bold tracking-[-0.015em] [font-family:'Noto_Sans',sans-serif]">
          HOME
        </a>
      ))}
    </nav>
  );
}

function FooterHeading({ children }: { children: React.ReactNode }) {
  return (
    <h3 className="text-[43px] leading-[50px] font-bold tracking-[0.012em] [font-family:'Noto_Sans',sans-serif]">
      {children}
    </h3>
  );
}

export default function App() {
  return (
    <div className="min-h-[3520px] w-full bg-white text-[32px] leading-[48px] tracking-[-0.02em] text-[#212529] [font-family:Inter,sans-serif]">
      <header className="flex h-[114px] items-start justify-between bg-[#e06339] pr-[38px] pl-[36px] text-white">
        <div className="flex items-start gap-[11px] pt-[12px]">
          <PinLogo className="h-[80px] w-[51px]" />
          <span className="text-[50px] leading-[48px] font-bold tracking-[-0.006em] [font-feature-settings:'cv11']">
            patashule
          </span>
        </div>
        <nav className="flex gap-[24px] pt-[27px] tracking-[-0.024em]">
          <NavItem icon="search" w="w-[30px]" label="SCHOOLS" />
          <NavItem icon="user" w="w-[23px]" label="ABOUT" />
          <NavItem icon="rss" w="w-[25px]" label="BLOG" />
          <NavItem icon="bars" w="w-[28px]" label="MORE" />
        </nav>
      </header>

      <main className="mx-auto w-[2280px] pt-[127px]">
        <section className="h-[959px] bg-[#f8f9fa] px-[48px] pt-[48px] shadow-[0_16px_32px_rgba(0,0,0,0.15)]">
          <h1 className="flex h-[135px] items-start text-[112px] leading-[134px] font-light tracking-[-0.044em] text-[#dc3545]">
            <Icon name="shield" className="mt-[21px] mr-[20px] h-[96px] w-[80px]" />
            <span className="mt-[2px]">St.Peter</span>
          </h1>
          <div className="mt-[16px] grid grid-cols-2 gap-x-[20px] gap-y-[20px]">
            {FACTS.map(([k, v]) => (
              <h5 key={k} className="h-[68px] border-2 border-[#dee2e6] text-center text-[40px] leading-[48px] font-medium tracking-[-0.029em]">
                {k} {v && <span className="text-[#007bff]">{v}</span>}
              </h5>
            ))}
          </div>
          <div className="mt-[128px] flex justify-end">
            <button className="flex h-[76px] w-[188px] items-center justify-center gap-[8px] rounded-[8px] bg-[#007bff] tracking-[-0.035em] text-white">
              <Icon name="envelope" className="h-[32px] w-[32px]" />
              <span className="mt-[2px]">APPLY</span>
            </button>
          </div>
          <div className="mt-[64px] mr-[2px] flex justify-end gap-[40px] font-bold tracking-[-0.002em] text-[#343a40]">
            <Stat icon="phone" w="w-[25px]">TELS</Stat>
            <Stat icon="car" w="w-[37px]">
              <span className="tracking-[-0.009em]">TRANSPORT: YES</span>
            </Stat>
            <Stat icon="laptop" w="w-[34px]">
              <span className="tracking-[-0.012em]">
                WEBSITE <span className="text-[#28a745]">ST.COM</span>
              </span>
            </Stat>
            <Stat icon="users" w="w-[34px]">
              STUDENTS ENROLLED <span className="text-[#007bff]">870</span>
            </Stat>
            <Stat icon="dollar" w="w-[18px]">
              STUDENT SUPPORT: <span className="text-[#007bff]">YES</span>
            </Stat>
          </div>
        </section>

        <p className="mt-[48px] text-[40px] leading-[60px] font-light tracking-[-0.0454em] whitespace-nowrap">
          Lorem ipsum dolor sit amet consectetur adipisicing elit. Culpa beatae laboriosam vero facilis aperiam ad quibusdam c um facere quis
          <br />
          ipsa. Dolorem laborum ad, amet esse architecto accusantium. Esse, aperiam odio?
        </p>

        <div className="mt-[32px] flex h-[144px] items-center bg-[#f8f9fa] pl-[48px] font-bold text-[#343a40]">
          <Icon name="bars" className="mr-[104px] h-[32px] w-[28px]" />
          <span className="mt-[2px] tracking-[32px]">CLICK HERE FOR MORE DETAILS</span>
        </div>

        <div className="relative mx-[30px] mt-[96px] h-[900px] overflow-hidden tracking-normal">
          <CityMap />
          <PlaceCard />
          <SatelliteThumb />
          <ZoomControl />
        </div>
      </main>

      <footer className="mt-[140px] h-[840px] bg-[#0b0b0b] pt-[48px] text-white">
        <div className="flex items-start justify-center">
          <FooterLinks />
          <div className="flex h-[288px] w-[284px] justify-center rounded-[50%] border-2 border-[#808080] pt-[74px]">
            <PinLogo className="h-[138px] w-[88px]" />
          </div>
          <FooterLinks />
        </div>
        <div className="mx-auto mt-[44px] flex w-[2280px] text-center">
          <div className="w-[760px]">
            <FooterHeading>SUBSCRIBE</FooterHeading>
            <form className="mt-[42px] flex justify-center pl-[2px]">
              <input className="h-[80px] w-[349px] border-2 border-r-0 border-[#808080] bg-transparent" />
              <button type="button" className="h-[80px] w-[161px] bg-[#6c777e] pt-[2px]">
                Send
              </button>
            </form>
          </div>
          <div className="w-[760px]">
            <FooterHeading>SUBSCRIBE</FooterHeading>
            <p className="mt-[43px]">
              Have a question or information?
              <br />
              <a className="text-[#dc3545]">oreo@gmail.com</a>
            </p>
          </div>
          <div className="w-[760px]">
            <FooterHeading>ABOUT</FooterHeading>
            <p className="mt-[43px] whitespace-nowrap">
              Lorem ipsum dolor sit amet consectetur,
              <br />
              adipisicing elit. Nesciunt illo consequuntur
              <br />
              inventore! Culpa delectus praesentium dolor ad
              <br />
              eligendi fugiat, doloremque sit similique
              <br />
              voluptatibus! Eum voluptatem tenetur amet, et
              <br />
              id voluptates.
            </p>
          </div>
        </div>
      </footer>
    </div>
  );
}
